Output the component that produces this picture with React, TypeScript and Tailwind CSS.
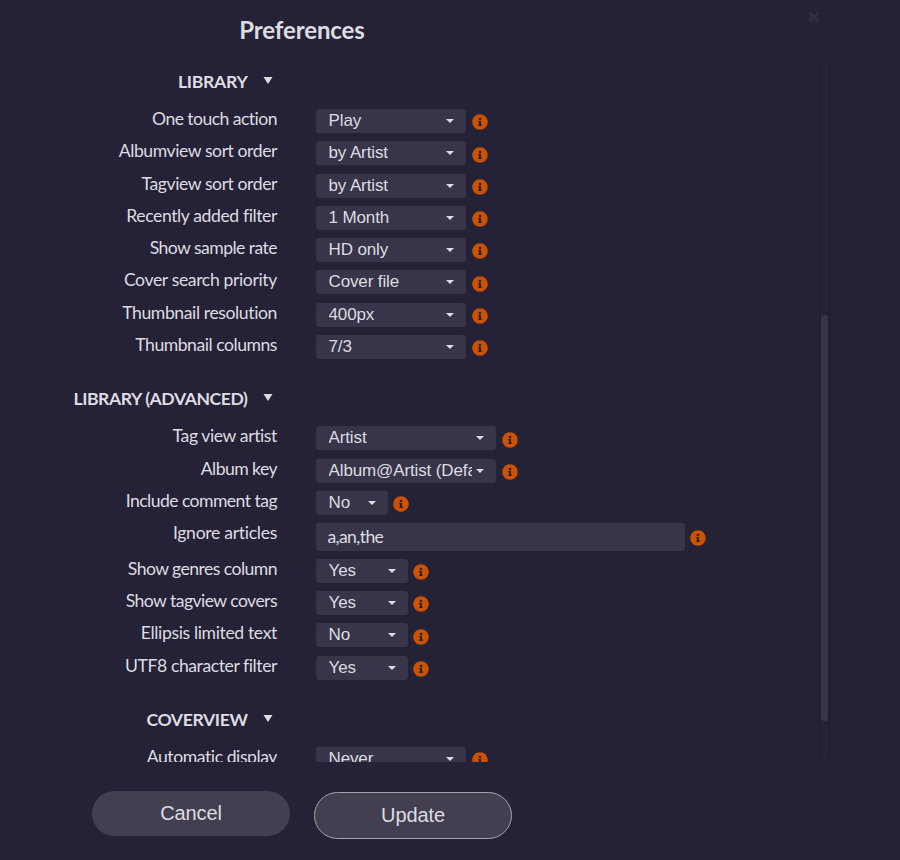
import { FaInfoCircle } from "react-icons/fa";

type Row = {
  label: string;
  value: string;
  width: string;
  tracking: string;
  height?: string;
  info?: string;
  input?: boolean;
};

const W150 = "w-[150px]";
const W180 = "w-[180px]";
const W72 = "w-[72px]";
const W92 = "w-[92px]";

const TIGHT = "tracking-[-0.55px]";
const MEDIUM = "tracking-[-0.43px]";
const LOOSE = "tracking-[-0.37px]";

const library: Row[] = [
  { label: "One touch action", value: "Play", width: W150, tracking: TIGHT },
  { label: "Albumview sort order", value: "by Artist", width: W150, tracking: MEDIUM, height: "h-[33px]", info: "mt-1.5" },
  { label: "Tagview sort order", value: "by Artist", width: W150, tracking: MEDIUM },
  { label: "Recently added filter", value: "1 Month", width: W150, tracking: "tracking-[-0.4px]" },
  { label: "Show sample rate", value: "HD only", width: W150, tracking: TIGHT },
  { label: "Cover search priority", value: "Cover file", width: W150, tracking: LOOSE, height: "h-[33px]", info: "mt-1.5" },
  { label: "Thumbnail resolution", value: "400px", width: W150, tracking: "tracking-[-0.4px]" },
  { label: "Thumbnail columns", value: "7/3", width: W150, tracking: "tracking-[-0.47px]" },
];

const advanced: Row[] = [
  { label: "Tag view artist", value: "Artist", width: W180, tracking: "tracking-[-0.4px]", height: "h-[33px]", info: "mt-1.5" },
  { label: "Album key", value: "Album@Artist (Default)", width: W180, tracking: TIGHT },
  { label: "Include comment tag", value: "No", width: W72, tracking: TIGHT },
  { label: "Ignore articles", value: "a,an,the", width: "w-[369px]", tracking: "tracking-[-0.3px]", height: "h-9", info: "mt-[7px]", input: true },
  { label: "Show genres column", value: "Yes", width: W92, tracking: TIGHT },
  { label: "Show tagview covers", value: "Yes", width: W92, tracking: TIGHT },
  { label: "Ellipsis limited text", value: "No", width: W92, tracking: LOOSE, height: "h-[33px]", info: "mt-1.5" },
  { label: "UTF8 character filter", value: "Yes", width: W92, tracking: MEDIUM },
];

const coverview: Row[] = [{ label: "Automatic display", value: "Never", width: W150, tracking: MEDIUM }];

function Select({ value, width }: { value: string; width: string }) {
  return (
    <div className={`flex h-6 shrink-0 items-center rounded-[3px] bg-[#383449] pl-[12.5px] pr-3 ${width}`}>
      <span className="h-6 min-w-0 flex-1 overflow-hidden whitespace-nowrap font-['Liberation_Sans',Arial,sans-serif] text-[17px] leading-[23px] tracking-[-0.12px]">
        {value}
      </span>
      <svg className="ml-1 h-1 w-2 shrink-0" viewBox="0 0 8 4" fill="#dddce1">
        <path d="M0 0h8L4 4z" />
      </svg>
    </div>
  );
}

function SettingRow({ row }: { row: Row }) {
  return (
    <div className={`flex items-start ${row.height ?? "h-8"}`}>
      <label className={`w-[277px] whitespace-nowrap text-right text-[17.6px] leading-5 ${row.tracking}`}>{row.label}</label>
      <div className="ml-[39px] flex items-start">
        {row.input ? (
          <div className={`h-7 rounded-[3px] bg-[#383449] pl-[11.5px] text-[17.6px] leading-7 tracking-[-0.62px] ${row.width}`}>{row.value}</div>
        ) : (
          <Select value={row.value} width={row.width} />
        )}
        <FaInfoCircle className={`size-4 text-[#cb5200] ${row.width === W150 || row.width === W180 ? "ml-[5.5px]" : "ml-[5px]"} ${row.info ?? "mt-[5px]"}`} />
      </div>
    </div>
  );
}

function Section({ title, rows, height, tracking }: { title: string; rows: Row[]; height: string; tracking: string }) {
  return (
    <section className={height}>
      <h2 className={`flex h-[39px] items-start text-[17.6px] font-bold leading-6 ${tracking}`}>
        <span className="w-[247.5px] whitespace-nowrap text-right">{title}</span>
        <svg className="ml-[15.5px] mt-[7px] h-[7px] w-[10px]" viewBox="0 0 10 7" fill="#dddce1">
          <path d="M.5 0h9L5 7z" />
        </svg>
      </h2>
      {rows.map((row) => (
        <SettingRow key={row.label} row={row} />
      ))}
    </section>
  );
}

export default function App() {
  return (
    <div className="flex h-[860px] w-[900px] flex-col overflow-hidden bg-[#252137] font-[Lato,sans-serif] text-[#dddce1]">
      <header className="flex h-[59px] shrink-0 items-start">
        <h1 className="w-[604px] pt-[14px] text-center text-[24px] font-bold leading-8 tracking-[-0.12px]">Preferences</h1>
        <svg className="ml-[204px] mt-[11px] size-3" viewBox="0 0 12 12" stroke="#302c42" strokeWidth="3.6">
          <path d="M1.5 1.5l9 9M10.5 1.5l-9 9" />
        </svg>
      </header>
      <main className="flex h-[703px] shrink-0">
        <div className="w-[819px] overflow-hidden pt-[11px]">
          <Section title="LIBRARY" rows={library} height="h-[317px]" tracking="tracking-[-0.3px]" />
          <Section title="LIBRARY (ADVANCED)" rows={advanced} height="h-[321px]" tracking="tracking-[-0.43px]" />
          <Section title="COVERVIEW" rows={coverview} height="h-[80px]" tracking="tracking-[-0.38px]" />
        </div>
        <div className="h-[703px] w-[11px] rounded-[5px] border border-[#1f1b30] px-px pt-[255px]">
          <div className="h-[406px] w-[7px] rounded-[3px] bg-[#383449]" />
        </div>
      </main>
      <footer className="flex items-start gap-6 pl-[92px] pt-[29px] font-['Liberation_Sans',Arial,sans-serif] text-[20px] tracking-[-0.1px]">
        <button className="h-[45px] w-[198px] rounded-full bg-[#433f50] pb-0.5">Cancel</button>
        <button className="mt-px h-[47px] w-[198px] rounded-full border border-[#a5a3ad] bg-[#433f50] pb-0.5">Update</button>
      </footer>
    </div>
  );
}
